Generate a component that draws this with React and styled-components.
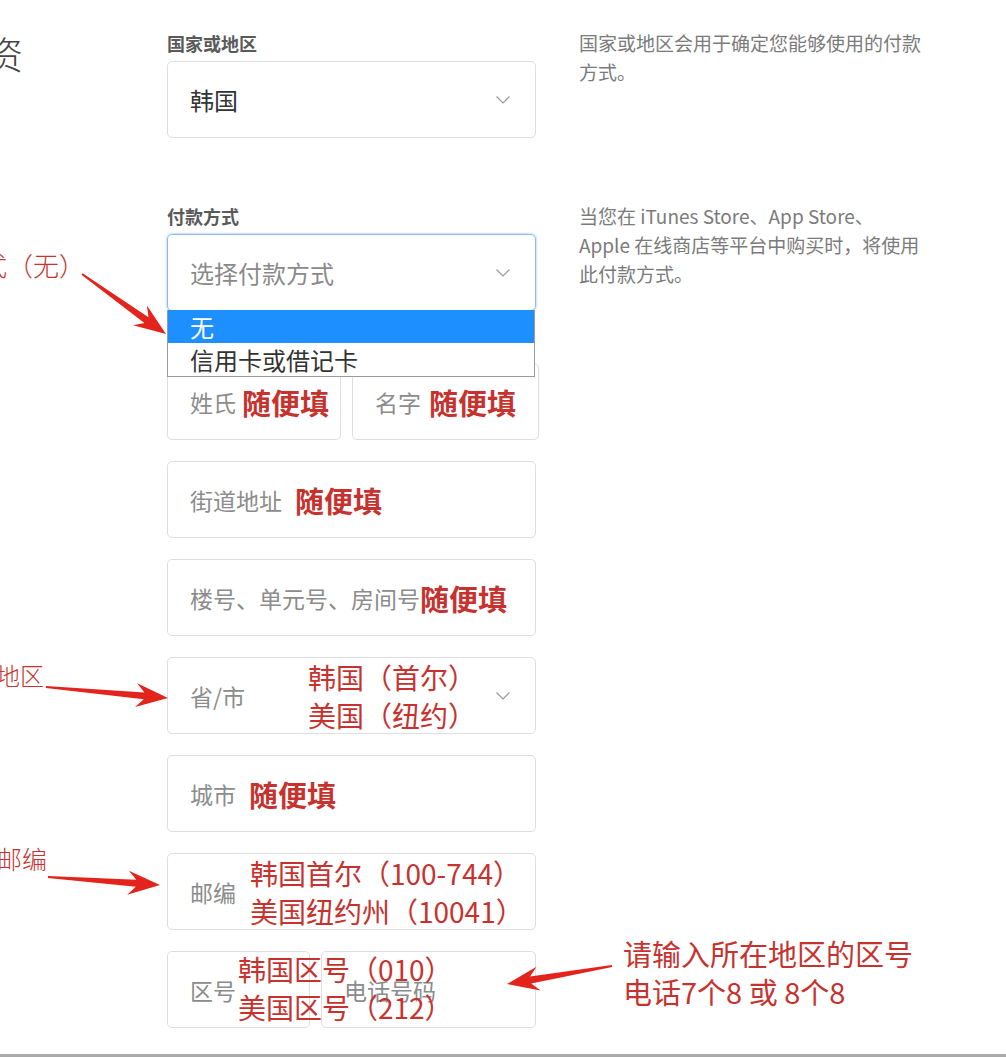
import React from "react";
import styled, { createGlobalStyle } from "styled-components";

const RED = "#c6332f";

const GlobalStyle = createGlobalStyle`
  html, body {
    margin: 0;
    padding: 0;
    background: #fff;
  }
  body {
    font-family: "Noto Sans CJK SC", "Noto Sans", sans-serif;
  }
`;

const arrows = [
  [[82, 274], [166, 334]],
  [[46, 687], [168, 698]],
  [[48, 877], [160, 885]],
  [[612, 966], [507, 984]],
];

// tapered annotation arrow, tail -> tip
const arrowPoints = ([x1, y1], [x2, y2]) => {
  const dx = x2 - x1;
  const dy = y2 - y1;
  const len = Math.hypot(dx, dy);
  const ux = dx / len;
  const uy = dy / len;
  const pt = (a, b) =>
    `${(x1 + ux * a - uy * b).toFixed(1)},${(y1 + uy * a + ux * b).toFixed(1)}`;
  const head = 32;
  return [
    pt(0, -1),
    pt(len - head + 8, -3.5),
    pt(len - head, -12),
    pt(len, 0),
    pt(len - head, 12),
    pt(len - head + 8, 3.5),
    pt(0, 1),
  ].join(" ");
};

const Chevron = () => (
  <ChevronIcon width="16" height="10" viewBox="0 0 16 10">
    <polyline points="1.5,1.5 8,8 14.5,1.5" fill="none" stroke="#9a9a9a" strokeWidth="1.2" />
  </ChevronIcon>
);

const App = () => {
  return (
    <>
      <GlobalStyle />
      <Page>
        <Row>
          <Gutter>
            <CutLabel $size={38} $shift={-15} $top={-2} $color="#444">资</CutLabel>
          </Gutter>
          <Field>
            <Label>国家或地区</Label>
            <SelectBox>
              <Value>韩国</Value>
              <Chevron />
            </SelectBox>
          </Field>
          <Help>
            国家或地区会用于确定您能够使用的付款
            <br />
            方式。
          </Help>
        </Row>

        <Row $gap={69}>
          <Gutter>
            <CutLabel $size={26} $shift={-19} $top={43} $color={RED}>式（无）</CutLabel>
          </Gutter>
          <Field>
            <Label>付款方式</Label>
            <SelectBox $focus>
              <Value $muted>选择付款方式</Value>
              <Chevron />
              <Menu>
                <MenuItem $active>无</MenuItem>
                <MenuItem>信用卡或借记卡</MenuItem>
              </Menu>
            </SelectBox>
          </Field>
          <Help>
            当您在 iTunes Store、App Store、
            <br />
            Apple 在线商店等平台中购买时，将使用
            <br />
            此付款方式。
          </Help>
        </Row>

        <Row $gap={52}>
          <Gutter />
          <Pair $cols="174px 1fr">
            <Box>
              <Placeholder>姓氏</Placeholder>
              <Fill $gap={6}>随便填</Fill>
            </Box>
            <Box>
              <Placeholder>名字</Placeholder>
              <Fill $gap={8}>随便填</Fill>
            </Box>
          </Pair>
        </Row>

        <Row $gap={21}>
          <Gutter />
          <Box>
            <Placeholder>街道地址</Placeholder>
            <Fill $gap={13}>随便填</Fill>
          </Box>
        </Row>

        <Row $gap={21}>
          <Gutter />
          <Box>
            <Placeholder>楼号、单元号、房间号</Placeholder>
            <Fill $gap={0}>随便填</Fill>
          </Box>
        </Row>

        <Row $gap={21}>
          <Gutter>
            <CutLabel $size={24} $shift={-4} $top={4} $color={RED}>地区</CutLabel>
          </Gutter>
          <Box>
            <Placeholder>省/市</Placeholder>
            <Note $indent={63}>
              韩国（首尔）
              <br />
              美国（纽约）
            </Note>
            <Chevron />
          </Box>
        </Row>

        <Row $gap={21}>
          <Gutter />
          <Box>
            <Placeholder>城市</Placeholder>
            <Fill $gap={13}>随便填</Fill>
          </Box>
        </Row>

        <Row $gap={21}>
          <Gutter>
            <CutLabel $size={25} $shift={-3} $top={-9} $color={RED}>邮编</CutLabel>
          </Gutter>
          <Box>
            <Placeholder>邮编</Placeholder>
            <Note $indent={14}>
              韩国首尔（100-744）
              <br />
              美国纽约州（10041）
            </Note>
          </Box>
        </Row>

        <Row $gap={21}>
          <Gutter />
          <Pair $cols="143px 1fr">
            <Box>
              <Placeholder>区号</Placeholder>
            </Box>
            <Box>
              <Placeholder>电话号码</Placeholder>
            </Box>
            <AreaNote>
              韩国区号（010）
              <br />
              美国区号（212）
            </AreaNote>
          </Pair>
          <RedHelp>
            请输入所在地区的区号
            <br />
            电话7个8 或 8个8
          </RedHelp>
        </Row>

        <ArrowLayer viewBox="0 0 1006 1057">
          {arrows.map(([from, to], i) => (
            <polygon key={i} points={arrowPoints(from, to)} fill="#e2241c" />
          ))}
        </ArrowLayer>
      </Page>
    </>
  );
};

export default App;

const Page = styled.div`
  position: relative;
  width: 1006px;
  height: 1057px;
  box-sizing: border-box;
  padding-top: 34px;
  overflow: hidden;
  display: flex;
  flex-direction: column;
  border-bottom: 3px solid #a9a9a9;
  background: #fff;
`;

const Row = styled.div`
  display: grid;
  grid-template-columns: 167px 369px 1fr;
  align-items: start;
  margin-top: ${({ $gap }) => $gap || 0}px;
`;

const Gutter = styled.div`
  min-width: 0;
`;

const CutLabel = styled.div`
  white-space: nowrap;
  font-size: ${({ $size }) => $size}px;
  line-height: ${({ $size }) => $size + 3}px;
  color: ${({ $color }) => $color};
  margin-left: ${({ $shift }) => $shift}px;
  margin-top: ${({ $top }) => $top}px;
  font-weight: 300;
`;

const Field = styled.div`
  display: flex;
  flex-direction: column;
`;

const Label = styled.div`
  font-size: 18px;
  line-height: 18px;
  font-weight: 600;
  color: #5a5a5a;
  margin-bottom: 9px;
`;

const SelectBox = styled.div`
  position: relative;
  height: 77px;
  box-sizing: border-box;
  display: flex;
  align-items: center;
  justify-content: space-between;
  padding: 0 22px;
  border: 1px solid ${({ $focus }) => ($focus ? "#8dbce6" : "#dedede")};
  border-radius: 5px;
  box-shadow: ${({ $focus }) => ($focus ? "0 0 2px 1px rgba(110, 165, 220, 0.35)" : "none")};
`;

const Value = styled.span`
  font-size: 24px;
  color: ${({ $muted }) => ($muted ? "#8a8a8a" : "#333")};
`;

const ChevronIcon = styled.svg`
  flex-shrink: 0;
  margin-left: auto;
  margin-right: 2px;
`;

const Menu = styled.div`
  position: absolute;
  top: 100%;
  left: -1px;
  right: 0;
  z-index: 2;
  background: #fff;
  border: 1px solid #9a9a9a;
  border-top: none;
`;

const MenuItem = styled.div`
  height: 33px;
  line-height: 33px;
  padding-left: 22px;
  font-size: 24px;
  background: ${({ $active }) => ($active ? "#1e8fff" : "#fff")};
  color: ${({ $active }) => ($active ? "#fff" : "#333")};
`;

const Help = styled.div`
  padding-left: 43px;
  margin-top: -6px;
  font-size: 19px;
  line-height: 29px;
  color: #7b7b7b;
  white-space: nowrap;
`;

const RedHelp = styled.div`
  padding-left: 87px;
  margin-top: -17px;
  font-size: 29px;
  line-height: 38px;
  color: ${RED};
  white-space: nowrap;
`;

const Pair = styled.div`
  position: relative;
  display: grid;
  grid-template-columns: ${({ $cols }) => $cols};
  column-gap: 11px;
`;

const Box = styled.div`
  height: 77px;
  box-sizing: border-box;
  display: flex;
  align-items: center;
  padding: 0 22px;
  border: 1px solid #dedede;
  border-radius: 5px;
  white-space: nowrap;
`;

const Placeholder = styled.span`
  font-size: 23px;
  color: #8c8c8c;
`;

const Fill = styled.span`
  font-size: 29px;
  font-weight: 700;
  color: ${RED};
  margin-left: ${({ $gap }) => $gap}px;
`;

const Note = styled.span`
  font-size: 28px;
  line-height: 38px;
  color: ${RED};
  margin-left: ${({ $indent }) => $indent}px;
`;

const AreaNote = styled.div`
  position: absolute;
  left: 71px;
  top: -1px;
  z-index: 1;
  font-size: 28px;
  line-height: 38px;
  color: ${RED};
  white-space: nowrap;
`;

const ArrowLayer = styled.svg`
  position: absolute;
  top: 0;
  left: 0;
  width: 1006px;
  height: 1057px;
  pointer-events: none;
  z-index: 3;
`;
